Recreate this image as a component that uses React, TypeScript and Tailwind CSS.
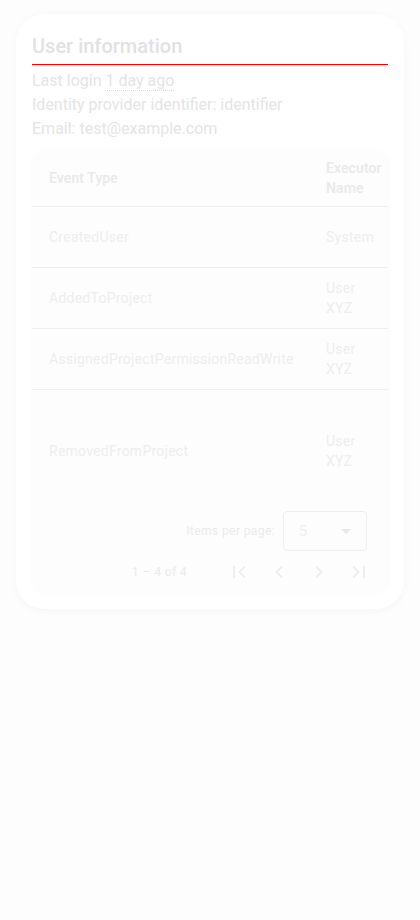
const rows = [
  { event: "CreatedUser", executor: "System", h: "h-[61px]" },
  { event: "AddedToProject", executor: "User XYZ", h: "h-[61px]" },
  { event: "AssignedProjectPermissionReadWrite", executor: "User XYZ", h: "h-[61px]" },
];

function PageIcon({ d }: { d: string }) {
  return (
    <button className="flex h-10 w-10 items-center justify-center">
      <svg width="24" height="24" viewBox="0 0 24 24" fill="#eeeeee">
        <path d={d} />
      </svg>
    </button>
  );
}

export default function App() {
  return (
    <div className="min-h-screen bg-[#fdfdfd] px-4 pt-[14px] font-['Roboto',sans-serif]">
      <div className="rounded-[28px] bg-white px-4 pb-4 pt-4 shadow-[0_2px_10px_rgba(0,0,0,0.035)]">
        <h2 className="border-b border-[#ff0000] pb-[2px] text-[20px] font-medium leading-[32px] text-[#e2e2e2]">
          User information
        </h2>
        <div className="mt-1 text-[16px] leading-[24px] text-[#e5e5e5]">
          <p>
            Last login{" "}
            <span className="border-b border-dotted border-[#dddddd]">1 day ago</span>
          </p>
          <p>Identity provider identifier: identifier</p>
          <p>Email: test@example.com</p>
        </div>

        <div className="mt-2 overflow-hidden rounded-[16px] bg-[#fdfdfd] shadow-[0_1px_6px_rgba(0,0,0,0.025)]">
          <div className="overflow-hidden">
            <div className="grid w-max grid-cols-[278px_min-content_120px] text-[14px] leading-[20px]">
              <div className="flex h-[58px] items-center border-b border-[#f0f0f0] pl-[17px] font-medium tracking-[0.1px] text-[#e9e9e9]">
                Event Type
              </div>
              <div className="flex h-[58px] items-center border-b border-[#f0f0f0] px-4 font-medium tracking-[0.1px] text-[#e9e9e9]">
                Executor Name
              </div>
              <div className="h-[58px] border-b border-[#f0f0f0]" />
              {rows.map((r) => (
                <div key={r.event} className="contents">
                  <div className={`flex ${r.h} items-center border-b border-[#f0f0f0] pl-[17px] tracking-[0.25px] text-[#eeeeee]`}>
                    {r.event}
                  </div>
                  <div className={`flex ${r.h} items-center border-b border-[#f0f0f0] px-4 tracking-[0.25px] text-[#eeeeee]`}>
                    {r.executor}
                  </div>
                  <div className={`${r.h} border-b border-[#f0f0f0]`} />
                </div>
              ))}
              <div className="flex h-[117px] items-center pl-[17px] pt-[5px] tracking-[0.25px] text-[#eeeeee]">
                RemovedFromProject
              </div>
              <div className="flex h-[117px] items-center px-4 pt-[5px] tracking-[0.25px] text-[#eeeeee]">
                User XYZ
              </div>
              <div className="h-[117px]" />
            </div>
          </div>

          <div className="pb-1 text-[12px] tracking-[0.4px] text-[#ebebeb]">
            <div className="flex h-[48px] items-center justify-end pr-[21px]">
              <span className="mr-2">Items per page:</span>
              <div className="flex h-10 w-[84px] items-center justify-between rounded-[4px] border border-[#efefef] pl-[15px] pr-[15px] text-[14px] text-[#eeeeee]">
                <span>5</span>
                <svg width="10" height="5" viewBox="0 0 10 5" fill="#e8e8e8">
                  <path d="M0 0l5 5 5-5z" />
                </svg>
              </div>
            </div>
            <div className="flex h-[34px] items-center justify-end pr-[9px]">
              <span className="mr-8">1 – 4 of 4</span>
              <PageIcon d="M18.41 16.59L13.82 12l4.59-4.59L17 6l-6 6 6 6zM6 6h2v12H6z" />
              <PageIcon d="M15.41 7.41L14 6l-6 6 6 6 1.41-1.41L10.83 12z" />
              <PageIcon d="M10 6L8.59 7.41 13.17 12l-4.58 4.59L10 18l6-6z" />
              <PageIcon d="M5.59 7.41L10.18 12l-4.59 4.59L7 18l6-6-6-6zM16 6h2v12h-2z" />
            </div>
          </div>
        </div>
      </div>
    </div>
  );
}
